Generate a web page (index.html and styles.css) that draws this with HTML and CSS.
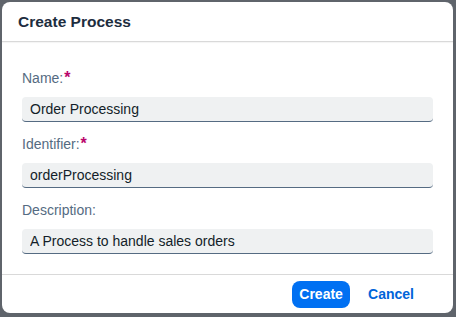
FILE: index.html
```html
<!DOCTYPE html>
<html lang="en">
<head>
    <meta charset="UTF-8">
    <meta name="viewport" content="width=device-width, initial-scale=1.0">
    <title>Create Process</title>
    <link rel="stylesheet" href="styles.css">
</head>
<body>
    <div class="dialog">
        <div class="dialog-header">
            <h1>Create Process</h1>
        </div>
        <div class="dialog-content">
            <div class="field">
                <label for="name">Name:<span class="required">*</span></label>
                <input id="name" class="input" type="text" value="Order Processing">
            </div>
            <div class="field">
                <label for="identifier">Identifier:<span class="required">*</span></label>
                <input id="identifier" class="input" type="text" value="orderProcessing">
            </div>
            <div class="field">
                <label for="description">Description:</label>
                <input id="description" class="input" type="text" value="A Process to handle sales orders">
            </div>
        </div>
        <div class="dialog-footer">
            <button class="btn btn-emphasized">Create</button>
            <button class="btn btn-transparent">Cancel</button>
        </div>
    </div>
</body>
</html>
```

FILE: styles.css
```css
body {
    font-family: "Liberation Sans", Arial, sans-serif;
    background-color: #5f646b;
    margin: 0;
    padding: 2px;
    height: 317px;
    box-sizing: border-box;
}

.dialog {
    width: 451px;
    height: 311px;
    background-color: #fff;
    border-radius: 8px;
    display: flex;
    flex-direction: column;
    overflow: hidden;
}

.dialog-header {
    height: 39px;
    display: flex;
    align-items: center;
    padding: 0 16px;
    border-bottom: 1px solid #d9d9d9;
    box-shadow: 0 1px 1px rgba(0, 0, 0, 0.04);
}

h1 {
    margin: 0;
    font-size: 15.5px;
    font-weight: bold;
    color: #1d2d3e;
}

.dialog-content {
    padding: 27px 20px 20px 20px;
    display: flex;
    flex-direction: column;
    gap: 13px;
    height: 185px;
}

.field {
    display: flex;
    flex-direction: column;
}

.field label {
    height: 18px;
    line-height: 18px;
    margin-bottom: 10px;
    font-size: 14px;
    color: #556b82;
}

.required {
    color: #ba066c;
    font-weight: bold;
    font-size: 16px;
    margin-left: 1px;
}

.input {
    height: 25px;
    box-sizing: border-box;
    border: none;
    border-bottom: 1px solid #556b82;
    border-radius: 4px;
    background-color: #eff1f2;
    padding: 0 8px;
    font-family: "Liberation Sans", Arial, sans-serif;
    font-size: 14px;
    color: #131e29;
    outline: none;
}

.dialog-footer {
    flex: 1;
    border-top: 1px solid #d9d9d9;
    display: flex;
    justify-content: flex-end;
    align-items: center;
    gap: 8px;
    padding-right: 29px;
}

.btn {
    height: 27px;
    border: none;
    border-radius: 8px;
    font-family: "Liberation Sans", Arial, sans-serif;
    font-size: 14px;
    font-weight: bold;
    cursor: pointer;
}

.btn-emphasized {
    width: 58px;
    background-color: #0070f2;
    color: #fff;
    padding: 0;
}

.btn-transparent {
    background: transparent;
    color: #0064d9;
    padding: 0 10px;
}
```
